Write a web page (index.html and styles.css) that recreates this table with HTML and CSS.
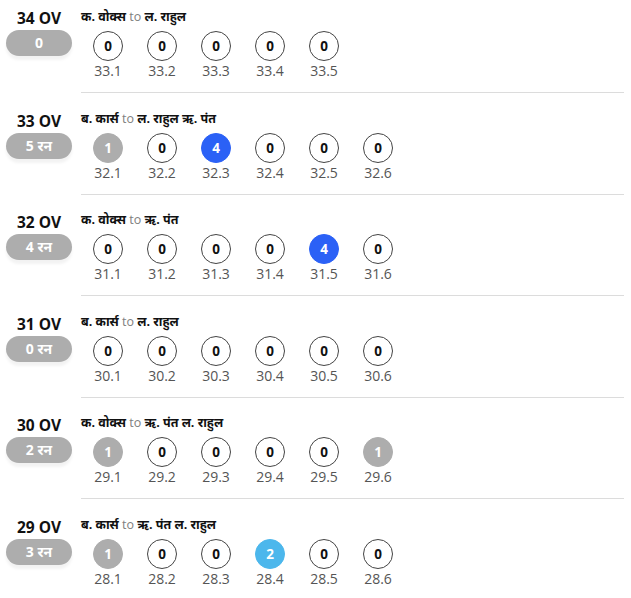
FILE: index.html
```html
<!DOCTYPE html>
<html lang="hi">
<head>
<meta charset="utf-8">
<link rel="stylesheet" href="styles.css">
</head>
<body>
<div class="list">
  <div class="over">
    <div class="side"><div class="ov">34 OV</div><div class="pill">0</div></div>
    <div class="main">
      <div class="who"><b>क. वोक्स</b> <span class="to">to</span> <b>ल. राहुल</b></div>
      <div class="balls">
        <div class="ball"><span class="c">0</span><span class="n">33.1</span></div>
        <div class="ball"><span class="c">0</span><span class="n">33.2</span></div>
        <div class="ball"><span class="c">0</span><span class="n">33.3</span></div>
        <div class="ball"><span class="c">0</span><span class="n">33.4</span></div>
        <div class="ball"><span class="c">0</span><span class="n">33.5</span></div>
      </div>
    </div>
  </div>
  <div class="over">
    <div class="side"><div class="ov">33 OV</div><div class="pill">5 रन</div></div>
    <div class="main">
      <div class="who"><b>ब. कार्स</b> <span class="to">to</span> <b>ल. राहुल ऋ. पंत</b></div>
      <div class="balls">
        <div class="ball"><span class="c one">1</span><span class="n">32.1</span></div>
        <div class="ball"><span class="c">0</span><span class="n">32.2</span></div>
        <div class="ball"><span class="c four">4</span><span class="n">32.3</span></div>
        <div class="ball"><span class="c">0</span><span class="n">32.4</span></div>
        <div class="ball"><span class="c">0</span><span class="n">32.5</span></div>
        <div class="ball"><span class="c">0</span><span class="n">32.6</span></div>
      </div>
    </div>
  </div>
  <div class="over">
    <div class="side"><div class="ov">32 OV</div><div class="pill">4 रन</div></div>
    <div class="main">
      <div class="who"><b>क. वोक्स</b> <span class="to">to</span> <b>ऋ. पंत</b></div>
      <div class="balls">
        <div class="ball"><span class="c">0</span><span class="n">31.1</span></div>
        <div class="ball"><span class="c">0</span><span class="n">31.2</span></div>
        <div class="ball"><span class="c">0</span><span class="n">31.3</span></div>
        <div class="ball"><span class="c">0</span><span class="n">31.4</span></div>
        <div class="ball"><span class="c four">4</span><span class="n">31.5</span></div>
        <div class="ball"><span class="c">0</span><span class="n">31.6</span></div>
      </div>
    </div>
  </div>
  <div class="over">
    <div class="side"><div class="ov">31 OV</div><div class="pill">0 रन</div></div>
    <div class="main">
      <div class="who"><b>ब. कार्स</b> <span class="to">to</span> <b>ल. राहुल</b></div>
      <div class="balls">
        <div class="ball"><span class="c">0</span><span class="n">30.1</span></div>
        <div class="ball"><span class="c">0</span><span class="n">30.2</span></div>
        <div class="ball"><span class="c">0</span><span class="n">30.3</span></div>
        <div class="ball"><span class="c">0</span><span class="n">30.4</span></div>
        <div class="ball"><span class="c">0</span><span class="n">30.5</span></div>
        <div class="ball"><span class="c">0</span><span class="n">30.6</span></div>
      </div>
    </div>
  </div>
  <div class="over">
    <div class="side"><div class="ov">30 OV</div><div class="pill">2 रन</div></div>
    <div class="main">
      <div class="who"><b>क. वोक्स</b> <span class="to">to</span> <b>ऋ. पंत ल. राहुल</b></div>
      <div class="balls">
        <div class="ball"><span class="c one">1</span><span class="n">29.1</span></div>
        <div class="ball"><span class="c">0</span><span class="n">29.2</span></div>
        <div class="ball"><span class="c">0</span><span class="n">29.3</span></div>
        <div class="ball"><span class="c">0</span><span class="n">29.4</span></div>
        <div class="ball"><span class="c">0</span><span class="n">29.5</span></div>
        <div class="ball"><span class="c one">1</span><span class="n">29.6</span></div>
      </div>
    </div>
  </div>
  <div class="over">
    <div class="side"><div class="ov">29 OV</div><div class="pill">3 रन</div></div>
    <div class="main">
      <div class="who"><b>ब. कार्स</b> <span class="to">to</span> <b>ऋ. पंत ल. राहुल</b></div>
      <div class="balls">
        <div class="ball"><span class="c one">1</span><span class="n">28.1</span></div>
        <div class="ball"><span class="c">0</span><span class="n">28.2</span></div>
        <div class="ball"><span class="c">0</span><span class="n">28.3</span></div>
        <div class="ball"><span class="c two">2</span><span class="n">28.4</span></div>
        <div class="ball"><span class="c">0</span><span class="n">28.5</span></div>
        <div class="ball"><span class="c">0</span><span class="n">28.6</span></div>
      </div>
    </div>
  </div>
</div>
</body>
</html>
```
FILE: styles.css
```css
html, body {
  margin: 0;
  padding: 0;
  background: #fff;
}
body {
  font-family: "Open Sans", "Noto Sans", sans-serif;
  color: #111;
}
.list {
  display: flex;
  flex-direction: column;
}
.over {
  display: flex;
  padding-right: 7px;
}
.side {
  width: 81px;
  flex: none;
  display: flex;
  flex-direction: column;
  align-items: center;
  padding: 7px 3px 0 0;
  box-sizing: border-box;
}
.ov {
  font-size: 15.5px;
  font-weight: 700;
  line-height: 22px;
  color: #111;
}
.pill {
  margin-top: 1px;
  width: 66px;
  height: 26px;
  border-radius: 13px;
  background: #adadad;
  color: #fff;
  font-size: 14px;
  font-weight: 700;
  line-height: 26px;
  text-align: center;
  box-shadow: 0 4px 3px rgba(0, 0, 0, 0.05);
}
.main {
  flex: 1;
  padding: 8px 0 11px;
  border-bottom: 1px solid #dcdcdc;
}
.over + .over .side {
  padding-top: 16.5px;
}
.over + .over .main {
  padding-top: 16.5px;
}
.over:last-child .main {
  border-bottom: none;
}
.who {
  font-size: 12.5px;
  line-height: 18px;
  color: #111;
}
.who b {
  font-weight: 700;
}
.to {
  color: #808080;
  font-weight: 400;
}
.balls {
  display: flex;
  margin-top: 5px;
}
.ball {
  width: 54px;
  display: flex;
  flex-direction: column;
  align-items: center;
}
.c {
  width: 30px;
  height: 30px;
  box-sizing: border-box;
  border: 1px solid #444;
  border-radius: 50%;
  display: flex;
  align-items: center;
  justify-content: center;
  font-size: 13.5px;
  font-weight: 700;
  color: #111;
}
.c.one {
  background: #adadad;
  border-color: #adadad;
  color: #fff;
}
.c.four {
  background: #2b61f6;
  border-color: #2b61f6;
  color: #fff;
}
.c.two {
  background: #4cb7ec;
  border-color: #4cb7ec;
  color: #fff;
}
.n {
  font-size: 14px;
  line-height: 20px;
  color: #555;
}
```
